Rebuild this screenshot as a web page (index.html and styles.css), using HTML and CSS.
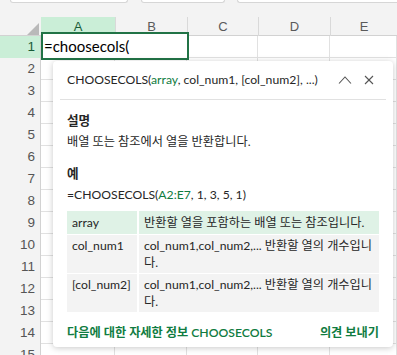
FILE: index.html
```html
<!DOCTYPE html>
<html>
<head>
  <title>CHOOSECOLS</title>
  <link rel="stylesheet" href="styles.css">
</head>
<body>
  <div class="topbar">
    <div class="topbox box1"></div>
    <div class="topbox box2"></div>
    <div class="topbox box3"></div>
  </div>

  <div class="sheet">
    <div class="colhead">
      <div class="corner"><span class="tri"></span></div>
      <div class="col active">A</div>
      <div class="col">B</div>
      <div class="col">C</div>
      <div class="col">D</div>
      <div class="col last">E</div>
    </div>
    <div id="rows"></div>

    <div class="editor">=choosecols(</div>

    <div class="tip">
      <div class="tip-head">
        <div class="tip-title">CHOOSECOLS(<span class="green">array</span>, col_num1, [col_num2], ...)</div>
        <svg class="ico" width="14" height="14" viewBox="0 0 14 14">
          <polyline points="1,10.5 7,4 13,10.5" fill="none" stroke="#555" stroke-width="1.1"/>
        </svg>
        <svg class="ico" width="14" height="14" viewBox="0 0 14 14">
          <line x1="3" y1="3" x2="11" y2="11" stroke="#555" stroke-width="1.1"/>
          <line x1="11" y1="3" x2="3" y2="11" stroke="#555" stroke-width="1.1"/>
        </svg>
      </div>
      <div class="tip-body">
        <div class="label">설명</div>
        <div class="text">배열 또는 참조에서 열을 반환합니다.</div>
        <div class="label ex">예</div>
        <div class="text">=CHOOSECOLS(<span class="green">A2:E7</span>, 1, 3, 5, 1)</div>
        <table class="args">
          <tr class="hl">
            <td class="name">array</td>
            <td>반환할 열을 포함하는 배열 또는 참조입니다.</td>
          </tr>
          <tr>
            <td class="name">col_num1</td>
            <td>col_num1,col_num2,... 반환할 열의 개수입니다.</td>
          </tr>
          <tr>
            <td class="name">[col_num2]</td>
            <td>col_num1,col_num2,... 반환할 열의 개수입니다.</td>
          </tr>
        </table>
        <div class="tip-foot">
          <span class="link">다음에 대한 자세한 정보 CHOOSECOLS</span>
          <span class="link">의견 보내기</span>
        </div>
      </div>
    </div>
  </div>

  <script>
    // grid rows
    const rows = document.getElementById("rows");
    for (let i = 1; i <= 15; i++) {
      const row = document.createElement("div");
      row.className = "row";
      const num = document.createElement("div");
      num.className = i === 1 ? "num active" : "num";
      num.textContent = i;
      row.appendChild(num);
      for (let c = 0; c < 5; c++) {
        const cell = document.createElement("div");
        cell.className = "cell";
        row.appendChild(cell);
      }
      rows.appendChild(row);
    }
  </script>
</body>
</html>
```

FILE: styles.css
```css
body {
  margin: 0;
  width: 397px;
  height: 355px;
  overflow: hidden;
  background-color: #fff;
  font-family: Lato, "Noto Sans CJK KR", sans-serif;
}

.topbar {
  height: 17px;
  background-color: #f3f3f3;
  display: flex;
  align-items: flex-start;
}

.topbox {
  height: 2px;
  background-color: #fff;
  border: 1px solid #d6d6d6;
  border-top: none;
  border-radius: 0 0 4px 4px;
}

.box1 { margin-left: 10px; width: 116px; }
.box2 { margin-left: 13px; width: 82px; }
.box3 { margin-left: 12px; flex: 1; border-right: none; border-radius: 0 0 0 4px; }

.sheet {
  position: relative;
}

.colhead,
.row {
  display: grid;
  grid-template-columns: 41px 74px 72px 71px 72px 1fr;
}

.colhead {
  height: 18px;
  background-color: #f3f3f3;
  border-bottom: 1px solid #d2d2d2;
  font-family: "Liberation Sans", sans-serif;
  font-size: 13px;
  color: #5a5a5a;
}

.corner {
  position: relative;
}

.tri {
  position: absolute;
  right: 2px;
  bottom: 1px;
  width: 0;
  height: 0;
  border-left: 12px solid transparent;
  border-bottom: 12px solid #b9b9b9;
}

.col {
  border-left: 1px solid #d9d9d9;
  text-align: center;
  line-height: 19px;
}

.col.active {
  background-color: #caeed7;
  color: #185c37;
  border-left: none;
}

.row {
  height: 21px;
  border-bottom: 1px solid #e1e1e1;
}

.num {
  background-color: #f3f3f3;
  border-right: 1px solid #d2d2d2;
  text-align: right;
  padding-right: 5px;
  font-family: "Liberation Sans", sans-serif;
  font-size: 13.5px;
  line-height: 22px;
  color: #555;
}

.num.active {
  background-color: #caeed7;
  color: #185c37;
}

.cell {
  border-right: 1px solid #e1e1e1;
}

.editor {
  position: absolute;
  left: 41px;
  top: 15px;
  width: 143px;
  height: 24px;
  border: 2px solid #217346;
  background-color: #fff;
  font-family: Lato, sans-serif;
  font-size: 15px;
  line-height: 24px;
  padding-left: 1px;
  color: #000;
}

.tip {
  position: absolute;
  left: 53px;
  top: 44px;
  width: 340px;
  height: 286px;
  background-color: #fff;
  border-radius: 4px;
  box-shadow: 0 1px 6px rgba(0, 0, 0, 0.22);
  color: #262626;
  font-size: 12.2px;
}

.tip-head {
  margin: 0 7px;
  padding: 10px 10px 10px 7px;
  border-bottom: 1px solid #e1e1e1;
  display: flex;
  align-items: center;
  gap: 10px;
}

.tip-title {
  flex: 1;
  line-height: 18px;
  white-space: nowrap;
}

.ico {
  flex-shrink: 0;
}

.green {
  color: #107c41;
}

.tip-body {
  padding: 0 14px;
}

.label {
  font-weight: bold;
  font-size: 12.6px;
  line-height: 20px;
  margin-top: 11px;
}

.label.ex {
  margin-top: 12px;
}

.text {
  line-height: 20px;
  margin-top: 1px;
}

.args {
  width: 100%;
  margin-top: 5px;
  border-collapse: separate;
  border-spacing: 0 1px;
  margin-bottom: 0;
}

.args td {
  background-color: #f3f3f3;
  padding: 2px 5px;
  line-height: 17px;
  vertical-align: top;
}

.args td.name {
  width: 60px;
  border-right: 2px solid #fff;
}

.args tr.hl td {
  background-color: #dff2e6;
  padding: 3px 5px;
}

.tip-foot {
  display: flex;
  justify-content: space-between;
  margin-top: 10px;
  line-height: 20px;
}

.link {
  color: #107c41;
  font-weight: 600;
}
```
